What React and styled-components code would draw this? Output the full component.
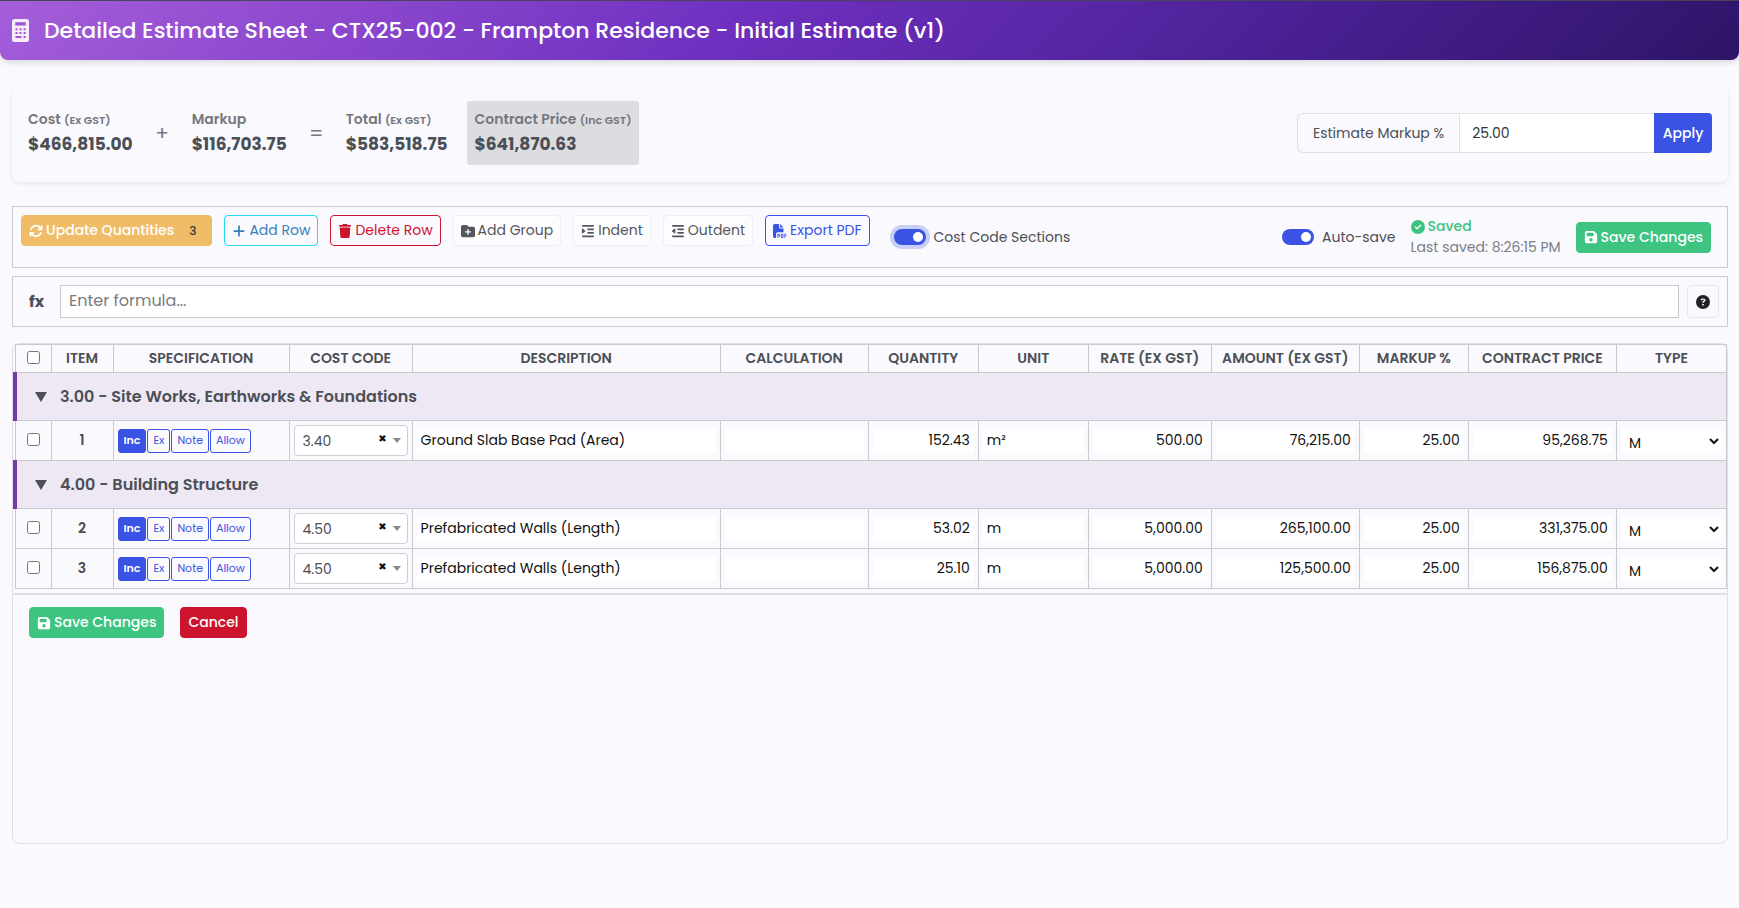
import { useState } from "react";
import styled, { createGlobalStyle } from "styled-components";
import {
  FaArrowsRotate,
  FaPlus,
  FaTrash,
  FaFolderPlus,
  FaIndent,
  FaOutdent,
  FaFilePdf,
  FaCircleCheck,
  FaFloppyDisk,
  FaCircleQuestion,
} from "react-icons/fa6";

const GlobalStyle = createGlobalStyle`
  * {
    box-sizing: border-box;
  }
  body {
    margin: 0;
    background: #f9f9fe;
    color: #4b4f56;
    font-family: Poppins, Inter, "Liberation Sans", sans-serif;
    font-size: 14px;
  }
  button, input, select {
    font-family: inherit;
  }
`;
const Header = styled.header`
  display: flex;
  align-items: center;
  gap: 15px;
  height: 60px;
  padding: 0 12px;
  border-top: 1px solid #4a4458;
  border-radius: 0 0 8px 8px;
  background: linear-gradient(135deg, #a55eda 0%, #6f30c0 42%, #4d2299 70%, #2e1467 100%);
  box-shadow: 0 2px 6px rgba(0, 0, 0, 0.15);
  color: #fff;
`;
const Title = styled.h1`
  margin: 0;
  font-size: 22px;
  font-weight: 500;
`;
const Main = styled.main`
  display: flex;
  flex-direction: column;
  padding: 24px 11px 24px 12px;
`;
const Summary = styled.section`
  display: flex;
  align-items: center;
  justify-content: space-between;
  margin-bottom: 24px;
  padding: 17px 16px;
  border-radius: 8px;
  box-shadow: 0 2px 4px rgba(0, 0, 0, 0.08);
`;
const Stats = styled.div`
  display: flex;
  align-items: center;
`;
const Stat = styled.div`
  padding: ${({ $highlight }) => ($highlight ? "8px 8px 6px" : "8px 0 6px")};
  margin-left: ${({ $highlight }) => ($highlight ? "19px" : "0")};
  border-radius: 3px;
  background: ${({ $highlight }) => ($highlight ? "#dddce1" : "transparent")};
`;
const StatLabel = styled.div`
  color: #74777e;
  font-size: 14px;
  font-weight: 600;
  line-height: 20px;
  small {
    font-size: 11px;
    line-height: 1;
  }
`;
const StatValue = styled.div`
  font-size: 17px;
  font-weight: 700;
  line-height: 30px;
`;
const Operator = styled.span`
  width: 59px;
  color: #74777e;
  font-size: 20px;
  text-align: center;
`;
const MarkupGroup = styled.form`
  display: flex;
  height: 40px;
  width: 415px;
`;
const MarkupLabel = styled.label`
  display: flex;
  align-items: center;
  padding: 0 15px;
  border: 1px solid #dfdfe4;
  border-right: 0;
  border-radius: 6px 0 0 6px;
  white-space: nowrap;
`;
const MarkupInput = styled.input`
  flex: 1;
  min-width: 0;
  padding: 0 12px;
  border: 1px solid #dfdfe4;
  border-right: 0;
  background: #fff;
  color: #33363c;
  font-size: 14px;
`;
const ApplyButton = styled.button`
  width: 58px;
  padding: 0;
  border: 0;
  border-radius: 0 4px 4px 0;
  background: #3a53e4;
  color: #fff;
  font-size: 14px;
  font-weight: 500;
`;
const Toolbar = styled.section`
  display: flex;
  justify-content: space-between;
  min-height: 62px;
  margin-bottom: 8px;
  padding: 8px 16px 8px 8px;
  border: 1px solid #c9c9cf;
`;
const ToolGroup = styled.div`
  display: flex;
  align-items: flex-start;
  gap: 12px;
`;
const StatusGroup = styled.div`
  display: flex;
  align-items: center;
  gap: 15px;
`;
const variants = {
  warning: ["#f0bc68", "#f0bc68", "#fff"],
  info: ["transparent", "#27d9ee", "#3a7fb8"],
  danger: ["transparent", "#cc142e", "#cc142e"],
  light: ["#fdfdff", "#ededf2", "#55575c"],
  primary: ["transparent", "#3a53e4", "#3a53e4"],
  success: ["#3cc480", "#3cc480", "#fff"],
  cancel: ["#cc142e", "#cc142e", "#fff"],
};
const Button = styled.button`
  display: inline-flex;
  align-items: center;
  gap: 3px;
  height: 31px;
  padding: 0 7px;
  border: 1px solid ${({ $variant }) => variants[$variant][1]};
  border-radius: 4px;
  background: ${({ $variant }) => variants[$variant][0]};
  color: ${({ $variant }) => variants[$variant][2]};
  font-size: 14px;
  font-weight: ${({ $strong }) => ($strong ? 500 : 400)};
  white-space: nowrap;
  svg {
    width: auto;
    height: 14px;
  }
`;
const Badge = styled.span`
  padding: 0 8px;
  margin-left: 4px;
  color: #33363c;
  font-size: 12px;
`;
const SwitchLabel = styled.label`
  display: flex;
  align-items: center;
  gap: 8px;
  margin: ${({ $inset }) => ($inset ? "12px 0 0 12px" : "0")};
  line-height: 20px;
`;
const Switch = styled.input`
  appearance: none;
  display: flex;
  justify-content: flex-end;
  width: 32px;
  height: 16px;
  margin: 0;
  padding: 3px;
  border-radius: 8px;
  background: #3a53e4;
  box-shadow: ${({ $focused }) => ($focused ? "0 0 0 4px #c8cff6" : "none")};
  &::before {
    content: "";
    width: 10px;
    height: 10px;
    border-radius: 50%;
    background: #fff;
  }
  &:not(:checked) {
    justify-content: flex-start;
    background: #b5b7bf;
  }
`;
const SaveState = styled.div`
  color: #7b7e85;
  line-height: 21px;
`;
const Saved = styled.div`
  display: flex;
  align-items: center;
  gap: 3px;
  color: #3cc480;
  font-weight: 500;
`;
const FormulaBar = styled.section`
  display: flex;
  align-items: center;
  gap: 8px;
  margin-bottom: 16px;
  padding: 8px;
  border: 1px solid #c9c9cf;
`;
const FormulaLabel = styled.label`
  width: 31px;
  padding-left: 8px;
  font-size: 16px;
  font-weight: 700;
`;
const FormulaInput = styled.input`
  flex: 1;
  height: 33px;
  padding: 0 8px 2px;
  border: 1px solid #c9c9cf;
  background: #fff;
  font-size: 16px;
  &::placeholder {
    color: #797b81;
  }
`;
const HelpButton = styled.button`
  display: flex;
  align-items: center;
  justify-content: center;
  width: 32px;
  height: 33px;
  border: 1px solid #e6e6ec;
  border-radius: 4px;
  background: #f9f9fe;
  color: #212227;
  font-size: 14px;
`;
const Sheet = styled.section`
  min-height: 501px;
  border: 1px solid #dfdfe5;
  border-radius: 8px;
`;
const TableWrap = styled.div`
  padding-bottom: 4px;
  border-bottom: 2px solid #dfdfe5;
`;
const Table = styled.table`
  width: 100%;
  border-collapse: collapse;
  table-layout: fixed;
`;
const Th = styled.th`
  height: 28px;
  padding: 0;
  border: 1px solid #c9c9cf;
  font-size: 14px;
  font-weight: 600;
  text-transform: uppercase;
  white-space: nowrap;
`;
const Td = styled.td`
  height: 40px;
  padding: 0 4px;
  border: 1px solid #c9c9cf;
  font-weight: 600;
  text-align: ${({ $center }) => ($center ? "center" : "left")};
`;
const GroupCell = styled.td`
  height: 48px;
  padding: 0 18px;
  border: 1px solid #c9c9cf;
  border-left: 4px solid #7339a6;
  background: #eee8f5;
`;
const GroupToggle = styled.button`
  display: flex;
  align-items: center;
  gap: 13px;
  padding: 0;
  border: 0;
  background: none;
  color: #4b4f56;
  font-size: 16px;
  font-weight: 600;
`;
const Caret = styled.span`
  border: ${({ $small }) => ($small ? "4px" : "6px")} solid transparent;
  border-top: ${({ $small }) => ($small ? "5px solid #888" : "10px solid #4b4f56")};
  border-bottom: 0;
`;
const Check = styled.input`
  display: block;
  width: 13px;
  height: 13px;
  margin: 0 auto 3px;
`;
const SpecGroup = styled.div`
  display: flex;
  gap: 1px;
`;
const SpecButton = styled.button`
  height: 24px;
  padding: 0 5px;
  border: 1px solid #3a53e4;
  border-radius: 3px;
  background: ${({ $active }) => ($active ? "#3a53e4" : "transparent")};
  color: ${({ $active }) => ($active ? "#fff" : "#3a53e4")};
  font-size: 11px;
  font-weight: ${({ $active }) => ($active ? 600 : 400)};
`;
const CodeBox = styled.div`
  position: relative;
`;
const CodeSelect = styled.select`
  appearance: none;
  display: block;
  width: 100%;
  height: 31px;
  padding: 0 8px;
  border: 1px solid #ceced6;
  border-radius: 4px;
  background: #fff;
  color: #4b4f56;
  font-size: 14px;
`;
const CodeMarks = styled.span`
  position: absolute;
  top: 0;
  right: 7px;
  display: flex;
  align-items: center;
  gap: 6px;
  height: 31px;
  pointer-events: none;
`;
const ClearMark = styled.span`
  padding-bottom: 4px;
  color: #111;
  font-family: "DejaVu Sans", sans-serif;
  font-size: 10px;
`;
const CellInput = styled.input`
  display: block;
  width: 100%;
  height: 24px;
  padding: 0 4px 1px;
  border: 0;
  background: #fff;
  color: #111;
  font-size: 14px;
  text-align: ${({ $right }) => ($right ? "right" : "left")};
`;
const TypeSelect = styled.select`
  display: block;
  width: 100%;
  height: 24px;
  padding: 3px 4px 0;
  border: 0;
  background: #fff;
  color: #111;
  font-size: 14px;
`;
const Actions = styled.div`
  display: flex;
  gap: 16px;
  padding: 12px 16px;
`;

const columns = [
  { title: "Item", width: 62 },
  { title: "Specification", width: 176 },
  { title: "Cost Code", width: 123 },
  { title: "Description", width: 308 },
  { title: "Calculation", width: 148 },
  { title: "Quantity", width: 110 },
  { title: "Unit", width: 110 },
  { title: "Rate (Ex GST)", width: 123 },
  { title: "Amount (Ex GST)", width: 148 },
  { title: "Markup %", width: 109 },
  { title: "Contract Price", width: 148 },
  { title: "Type", width: 110 },
];

const groups = [
  {
    title: "3.00 - Site Works, Earthworks & Foundations",
    rows: [
      {
        item: 1,
        code: "3.40",
        description: "Ground Slab Base Pad (Area)",
        quantity: "152.43",
        unit: "m²",
        rate: "500.00",
        amount: "76,215.00",
        markup: "25.00",
        price: "95,268.75",
      },
    ],
  },
  {
    title: "4.00 - Building Structure",
    rows: [
      {
        item: 2,
        code: "4.50",
        description: "Prefabricated Walls (Length)",
        quantity: "53.02",
        unit: "m",
        rate: "5,000.00",
        amount: "265,100.00",
        markup: "25.00",
        price: "331,375.00",
      },
      {
        item: 3,
        code: "4.50",
        description: "Prefabricated Walls (Length)",
        quantity: "25.10",
        unit: "m",
        rate: "5,000.00",
        amount: "125,500.00",
        markup: "25.00",
        price: "156,875.00",
      },
    ],
  },
];

const specs = ["Inc", "Ex", "Note", "Allow"];

const fields = [
  { key: "description" },
  { key: "calculation" },
  { key: "quantity", right: true },
  { key: "unit" },
  { key: "rate", right: true },
  { key: "amount", right: true },
  { key: "markup", right: true },
  { key: "price", right: true },
];

const CalculatorIcon = () => (
  <svg width="17" height="23" viewBox="0 0 17 23" aria-hidden="true">
    <rect width="17" height="23" rx="2.5" fill="#f6ecfc" />
    <g fill="#9a56d4">
      <rect x="3.2" y="3.2" width="10.6" height="3.4" rx="0.4" />
      <rect x="3.5" y="9.3" width="2" height="2" rx="0.4" />
      <rect x="7.5" y="9.3" width="2" height="2" rx="0.4" />
      <rect x="11.6" y="9.3" width="2" height="2" rx="0.4" />
      <rect x="3.5" y="13.1" width="2" height="2" rx="0.4" />
      <rect x="7.5" y="13.1" width="2" height="2" rx="0.4" />
      <rect x="11.6" y="13.1" width="2" height="2" rx="0.4" />
      <rect x="3.5" y="17" width="6" height="2" rx="0.4" />
      <rect x="11.6" y="17" width="2" height="2" rx="0.4" />
    </g>
  </svg>
);

const EstimateRow = ({ row }) => {
  const [spec, setSpec] = useState("Inc");
  return (
    <tr>
      <Td $center>
        <Check type="checkbox" aria-label={`Select row ${row.item}`} />
      </Td>
      <Td $center>{row.item}</Td>
      <Td>
        <SpecGroup>
          {specs.map((name) => (
            <SpecButton key={name} type="button" $active={spec === name} onClick={() => setSpec(name)}>
              {name}
            </SpecButton>
          ))}
        </SpecGroup>
      </Td>
      <Td>
        <CodeBox>
          <CodeSelect aria-label="Cost code" defaultValue={row.code}>
            <option>3.40</option>
            <option>4.50</option>
          </CodeSelect>
          <CodeMarks>
            <ClearMark>✖</ClearMark>
            <Caret $small />
          </CodeMarks>
        </CodeBox>
      </Td>
      {fields.map(({ key, right }) => (
        <Td key={key}>
          <CellInput aria-label={key} $right={right} defaultValue={row[key] || ""} />
        </Td>
      ))}
      <Td>
        <TypeSelect aria-label="Type" defaultValue="M">
          <option>M</option>
          <option>L</option>
        </TypeSelect>
      </Td>
    </tr>
  );
};

const EstimateGroup = ({ title, rows }) => {
  const [open, setOpen] = useState(true);
  return (
    <tbody>
      <tr>
        <GroupCell colSpan={13}>
          <GroupToggle type="button" aria-expanded={open} onClick={() => setOpen(!open)}>
            <Caret />
            {title}
          </GroupToggle>
        </GroupCell>
      </tr>
      {open && rows.map((row) => <EstimateRow key={row.item} row={row} />)}
    </tbody>
  );
};

const App = () => {
  return (
    <>
      <GlobalStyle />
      <Header>
        <CalculatorIcon />
        <Title>Detailed Estimate Sheet - CTX25-002 - Frampton Residence - Initial Estimate (v1)</Title>
      </Header>
      <Main>
        <Summary>
          <Stats>
            <Stat>
              <StatLabel>
                Cost <small>(Ex GST)</small>
              </StatLabel>
              <StatValue>$466,815.00</StatValue>
            </Stat>
            <Operator>+</Operator>
            <Stat>
              <StatLabel>Markup</StatLabel>
              <StatValue>$116,703.75</StatValue>
            </Stat>
            <Operator>=</Operator>
            <Stat>
              <StatLabel>
                Total <small>(Ex GST)</small>
              </StatLabel>
              <StatValue>$583,518.75</StatValue>
            </Stat>
            <Stat $highlight>
              <StatLabel>
                Contract Price <small>(Inc GST)</small>
              </StatLabel>
              <StatValue>$641,870.63</StatValue>
            </Stat>
          </Stats>
          <MarkupGroup onSubmit={(e) => e.preventDefault()}>
            <MarkupLabel htmlFor="markup">Estimate Markup %</MarkupLabel>
            <MarkupInput id="markup" defaultValue="25.00" />
            <ApplyButton type="submit">Apply</ApplyButton>
          </MarkupGroup>
        </Summary>
        <Toolbar>
          <ToolGroup>
            <Button $variant="warning" $strong>
              <FaArrowsRotate />
              Update Quantities
              <Badge>3</Badge>
            </Button>
            <Button $variant="info">
              <FaPlus />
              Add Row
            </Button>
            <Button $variant="danger">
              <FaTrash />
              Delete Row
            </Button>
            <Button $variant="light">
              <FaFolderPlus />
              Add Group
            </Button>
            <Button $variant="light">
              <FaIndent />
              Indent
            </Button>
            <Button $variant="light">
              <FaOutdent />
              Outdent
            </Button>
            <Button $variant="primary">
              <FaFilePdf />
              Export PDF
            </Button>
            <SwitchLabel $inset>
              <Switch type="checkbox" defaultChecked $focused />
              Cost Code Sections
            </SwitchLabel>
          </ToolGroup>
          <StatusGroup>
            <SwitchLabel>
              <Switch type="checkbox" defaultChecked />
              Auto-save
            </SwitchLabel>
            <SaveState>
              <Saved>
                <FaCircleCheck />
                Saved
              </Saved>
              Last saved: 8:26:15 PM
            </SaveState>
            <Button $variant="success" $strong>
              <FaFloppyDisk />
              Save Changes
            </Button>
          </StatusGroup>
        </Toolbar>
        <FormulaBar>
          <FormulaLabel htmlFor="formula">fx</FormulaLabel>
          <FormulaInput id="formula" placeholder="Enter formula..." />
          <HelpButton type="button" aria-label="Formula help">
            <FaCircleQuestion />
          </HelpButton>
        </FormulaBar>
        <Sheet>
          <TableWrap>
            <Table>
              <colgroup>
                <col width={36} />
                {columns.map((column) => (
                  <col key={column.title} width={column.width} />
                ))}
              </colgroup>
              <thead>
                <tr>
                  <Th>
                    <Check type="checkbox" aria-label="Select all rows" />
                  </Th>
                  {columns.map((column) => (
                    <Th key={column.title}>{column.title}</Th>
                  ))}
                </tr>
              </thead>
              {groups.map((group) => (
                <EstimateGroup key={group.title} {...group} />
              ))}
            </Table>
          </TableWrap>
          <Actions>
            <Button $variant="success" $strong>
              <FaFloppyDisk />
              Save Changes
            </Button>
            <Button $variant="cancel" $strong>
              Cancel
            </Button>
          </Actions>
        </Sheet>
      </Main>
    </>
  );
};

export default App;
